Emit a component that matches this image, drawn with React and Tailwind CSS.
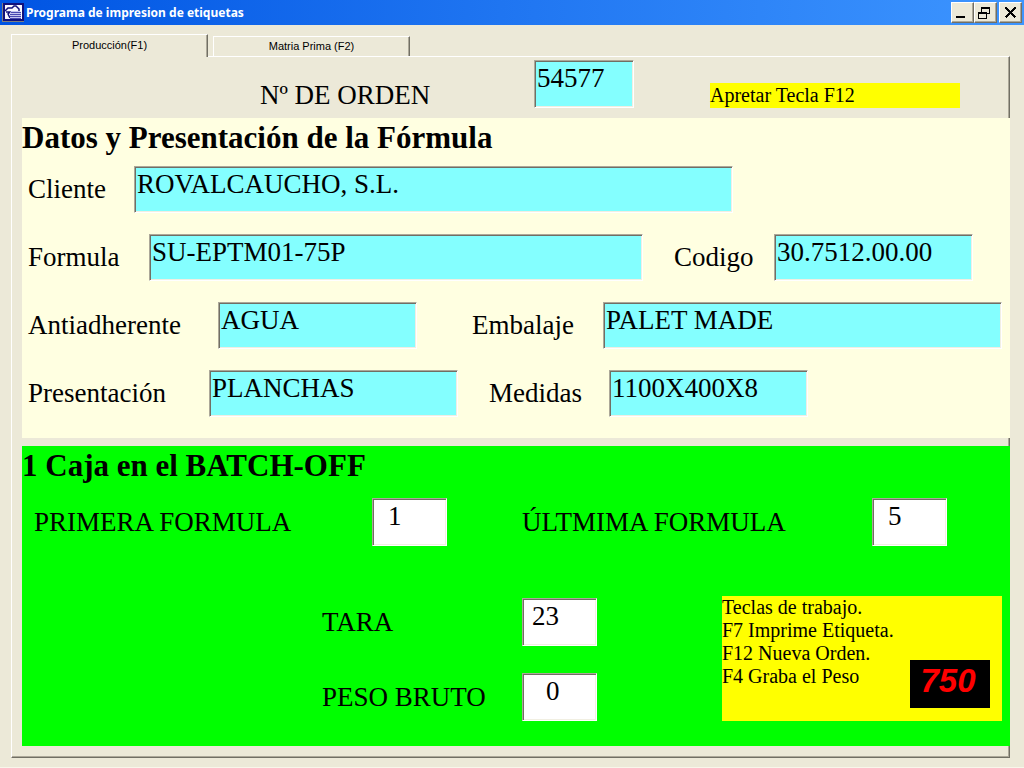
import React from "react";

const serif = "font-['Liberation_Serif','Times_New_Roman',serif]";
const bevel =
  "border border-t-[#aca899] border-l-[#aca899] border-r-white border-b-white shadow-[inset_1px_1px_0_#716f64,inset_-1px_-1px_0_#f1efe2]";

function Field({ id, label, value, labelClass, inputClass }) {
  return (
    <>
      <label htmlFor={id} className={`shrink-0 whitespace-nowrap ${labelClass}`}>
        {label}
      </label>
      <input
        id={id}
        type="text"
        defaultValue={value}
        className={`min-w-0 rounded-none pt-px pb-3 outline-none ${bevel} ${inputClass}`}
      />
    </>
  );
}

const cyan = "h-[47px] bg-[#84ffff] pl-[2px]";
const white = "h-12 w-[75px] bg-white";

function CaptionButton({ label, children }) {
  return (
    <button
      type="button"
      aria-label={label}
      className="h-[21px] w-[23px] border border-t-white border-l-white border-r-[#716f64] border-b-[#716f64] bg-[#ece9d8] shadow-[inset_-1px_-1px_0_#aca899]"
    >
      <svg width="21" height="19" viewBox="0 0 21 19" shapeRendering="crispEdges" fill="none" stroke="#000">
        {children}
      </svg>
    </button>
  );
}

function AppIcon() {
  return (
    <svg width="22" height="19" viewBox="0 0 22 19" aria-hidden="true">
      <path d="M0 0 H22 V19 H0 Z" fill="#7f7f7f" />
      <path d="M1 0 H22 V18 H1 Z" fill="#10107c" />
      <path d="M3 2 H20 V16 H3 Z" fill="#f8f8ff" />
      <path d="M3 8 L6 5 H10 L12 3 H14 L17 6 V9" fill="none" stroke="#10107c" strokeWidth="1.5" />
      <path d="M4 9 H8 L6 11 L8 15" fill="none" stroke="#10107c" strokeWidth="1.5" />
      <path d="M9 8 L18 8 L19 10 V16 H8 V11 Z" fill="#c4c4f0" />
      <path d="M9 9.5 H19 M8 11.5 H19 M8 13.5 H19 M8 15.5 H19" stroke="#4848b0" shapeRendering="crispEdges" />
    </svg>
  );
}

export default function App() {
  return (
    <div className="flex min-h-screen flex-col border-b border-[#f8f6ea] bg-[#ece9d8] text-black">
      <header className="flex h-[25px] items-center bg-linear-to-r from-[#0054e3] to-[#3d95ff] px-[2px]">
        <AppIcon />
        <h1 className="ml-[2px] flex-1 font-['Noto_Sans',sans-serif] text-[12px] leading-4 font-bold text-white">
          Programa de impresion de etiquetas
        </h1>
        <div className="flex">
          <CaptionButton label="Minimizar">
            <path d="M4 14 h9" strokeWidth="2" />
          </CaptionButton>
          <CaptionButton label="Restaurar">
            <path d="M6.5 4 v5 M14.5 4 v7 M12 10.5 h3 M3.5 9 v7 M11.5 9 v7 M3 15.5 h9" strokeWidth="1" />
            <path d="M6 5 h9 M3 10 h9" strokeWidth="2" />
          </CaptionButton>
          <span className="w-[2px]" />
          <CaptionButton label="Cerrar">
            <path d="M5.5 4.5 L15.5 14.5 M15.5 4.5 L5.5 14.5" strokeWidth="2" />
          </CaptionButton>
        </div>
      </header>

      <main className="flex flex-col pt-[9px] pr-[14px] pb-[9px] pl-[11px]">
        <div role="tablist" className="flex items-end font-['Liberation_Sans',Arial,sans-serif] text-[11px]">
          <button
            type="button"
            role="tab"
            aria-selected="true"
            className="z-10 -mb-px h-[23px] w-[197px] border border-t-white border-r-[#716f64] border-b-0 border-l-white bg-[#ece9d8] pb-[2px] shadow-[inset_-1px_0_0_#aca899]"
          >
            Producción(F1)
          </button>
          <button
            type="button"
            role="tab"
            aria-selected="false"
            className="ml-[5px] h-5 w-[197px] border border-t-white border-r-[#716f64] border-b-0 border-l-white bg-[#ece9d8] shadow-[inset_-1px_0_0_#aca899]"
          >
            Matria Prima (F2)
          </button>
        </div>

        <div
          role="tabpanel"
          className={`border border-t-white border-r-[#716f64] border-b-[#716f64] border-l-white pb-[11px] pl-[10px] text-[27px] leading-[31px] shadow-[inset_-1px_-1px_0_#aca899] ${serif}`}
        >
          <div className="flex h-[61px] items-end pb-[7px] pl-[238px]">
            <Field
              id="orden"
              label="Nº DE ORDEN"
              value="54577"
              labelClass="w-[274px]"
              inputClass="mb-[3px] h-12 w-[100px] bg-[#84ffff] pl-[2px]"
            />
            <p className="mb-[3px] ml-[76px] h-[25px] w-[250px] bg-[#ffff00] text-[20px] leading-[25px]">Apretar Tecla F12</p>
          </div>

          <section className="-mr-px bg-[#ffffe1] pb-[21px]">
            <h2 className="mb-2 text-[31px] leading-10 font-bold">Datos y Presentación de la Fórmula</h2>
            <div className="flex flex-col gap-[21px] pl-[6px]">
              <div className="flex items-center">
                <Field id="cliente" label="Cliente" value="ROVALCAUCHO, S.L." labelClass="w-[106px]" inputClass={`w-[599px] ${cyan}`} />
              </div>
              <div className="flex items-center">
                <Field id="formula" label="Formula" value="SU-EPTM01-75P" labelClass="w-[121px]" inputClass={`w-[494px] ${cyan}`} />
                <Field id="codigo" label="Codigo" value="30.7512.00.00" labelClass="ml-[31px] w-[100px]" inputClass={`w-[199px] ${cyan}`} />
              </div>
              <div className="flex items-center">
                <Field id="antiadherente" label="Antiadherente" value="AGUA" labelClass="w-[190px]" inputClass={`w-[199px] ${cyan}`} />
                <Field id="embalaje" label="Embalaje" value="PALET MADE" labelClass="ml-[55px] w-[131px]" inputClass={`w-[399px] ${cyan}`} />
              </div>
              <div className="flex items-center">
                <Field id="presentacion" label="Presentación" value="PLANCHAS" labelClass="w-[181px]" inputClass={`w-[249px] ${cyan}`} />
                <Field id="medidas" label="Medidas" value="1100X400X8" labelClass="ml-[31px] w-[120px]" inputClass={`w-[199px] ${cyan}`} />
              </div>
            </div>
          </section>

          <section className="mt-2 -mr-px bg-[#00ff00] pb-[25px]">
            <h2 className="mb-3 text-[31px] leading-10 font-bold">1 Caja en el BATCH-OFF</h2>
            <div className="flex items-center pl-3">
              <Field id="primera" label="PRIMERA FORMULA" value="1" labelClass="w-[338px]" inputClass={`pl-[15px] ${white}`} />
              <Field id="ultima" label="ÚLTMIMA FORMULA" value="5" labelClass="ml-[75px] w-[350px]" inputClass={`pl-[15px] ${white}`} />
            </div>
            <div className="mt-[50px] flex items-end pl-[300px]">
              <div className="flex flex-col gap-[27px]">
                <div className="flex items-center">
                  <Field id="tara" label="TARA" value="23" labelClass="w-[200px]" inputClass={`pl-[9px] ${white}`} />
                </div>
                <div className="flex items-center">
                  <Field id="bruto" label="PESO BRUTO" value="0" labelClass="w-[200px]" inputClass={`pl-[23px] ${white}`} />
                </div>
              </div>
              <div className="ml-[125px] flex h-[125px] w-[280px] justify-between bg-[#ffff00]">
                <p className="text-[20px] leading-[23px] whitespace-nowrap">
                  Teclas de trabajo.
                  <br />
                  F7 Imprime Etiqueta.
                  <br />
                  F12 Nueva Orden.
                  <br />
                  F4 Graba el Peso
                </p>
                <output className="mr-3 mb-[13px] h-12 w-20 self-end bg-black pr-1 text-center font-['Liberation_Sans',Arial,sans-serif] text-[33px] leading-[42px] font-bold text-[#ff0000] italic">
                  750
                </output>
              </div>
            </div>
          </section>
        </div>
      </main>
    </div>
  );
}
